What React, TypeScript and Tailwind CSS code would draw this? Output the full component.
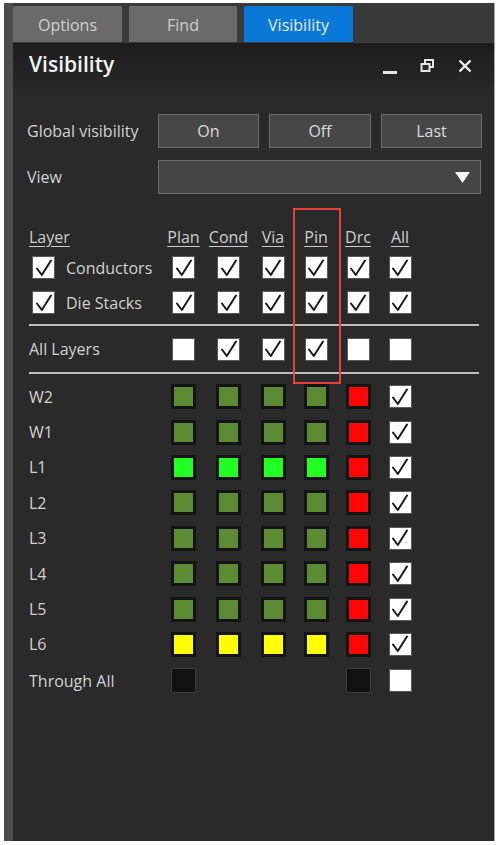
import React from 'react';

const OLIVE = 'bg-[#5d8b33]';
const BRIGHT = 'bg-[#22ff22]';
const RED = 'bg-[#ff0505]';
const YELLOW = 'bg-[#ffff00]';

const layers: { name: string; colors: string[] }[] = [
  { name: 'W2', colors: [OLIVE, OLIVE, OLIVE, OLIVE, RED] },
  { name: 'W1', colors: [OLIVE, OLIVE, OLIVE, OLIVE, RED] },
  { name: 'L1', colors: [BRIGHT, BRIGHT, BRIGHT, BRIGHT, RED] },
  { name: 'L2', colors: [OLIVE, OLIVE, OLIVE, OLIVE, RED] },
  { name: 'L3', colors: [OLIVE, OLIVE, OLIVE, OLIVE, RED] },
  { name: 'L4', colors: [OLIVE, OLIVE, OLIVE, OLIVE, RED] },
  { name: 'L5', colors: [OLIVE, OLIVE, OLIVE, OLIVE, RED] },
  { name: 'L6', colors: [YELLOW, YELLOW, YELLOW, YELLOW, RED] },
];

const cols = ['Plan', 'Cond', 'Via', 'Pin', 'Drc', 'All'];

function Check({ checked = true }: { checked?: boolean }) {
  return (
    <div className="w-[23px] h-[23px] bg-white border border-[#5a5a5a] flex items-center justify-center">
      {checked && (
        <svg width="20" height="20" viewBox="0 0 20 20">
          <path d="M3 10.5 L7.8 17 L17 2.5" fill="none" stroke="#1a1a1a" strokeWidth="2" strokeLinejoin="round" strokeLinecap="round" />
        </svg>
      )}
    </div>
  );
}

function Swatch({ color }: { color: string }) {
  return (
    <div className="w-[25px] h-[25px] bg-[#141414] p-[3px]">
      <div className={`w-full h-full ${color}`} />
    </div>
  );
}

function Cell({ children }: { children?: React.ReactNode }) {
  return <div className="flex items-center justify-center">{children}</div>;
}

const gridCols = 'grid grid-cols-[132px_45px_45px_44px_42px_42px_42px]';

export default function App() {
  return (
    <div
      className="w-[500px] h-[845px] bg-white flex pl-[4px] pr-[5px] pt-[3px] pb-[4px] text-[#d2d2d2]"
      style={{ fontFamily: '"Open Sans", "Noto Sans", sans-serif' }}
    >
      <div className="w-[9px] bg-[#4b4d4c]" />
      <div className="relative flex-1 flex flex-col bg-[#2a2a2a] border-r border-[#9aa8ae]">
        {/* Tabs */}
        <div className="h-[40px] bg-[#3a3a3a] flex items-start gap-[7px] pt-[3px]">
          <div className="w-[109px] h-[36px] bg-[#6a6a6a] rounded-t-[2px] flex items-center justify-center pt-[2px] text-[16px] text-[#cfcfcf]">
            Options
          </div>
          <div className="w-[108px] h-[36px] bg-[#6a6a6a] rounded-t-[2px] flex items-center justify-center pt-[2px] text-[16px] text-[#cfcfcf]">
            Find
          </div>
          <div className="w-[109px] h-[36px] bg-[#0a78d6] rounded-t-[2px] flex items-center justify-center pt-[2px] text-[16px] text-[#e4eefa]">
            Visibility
          </div>
        </div>

        {/* Title bar */}
        <div className="h-[52px] flex items-start pt-[8px] pl-[16px] pr-[22px] bg-gradient-to-b from-[#1c1c1c] to-[#2a2a2a]">
          <div className="text-[21px] leading-[26px] font-semibold text-[#f2f2f2]">Visibility</div>
          <div className="ml-auto flex items-center gap-[23px] h-[26px] mt-[2px]">
            <div className="w-[14px] h-[3px] bg-[#e6e6e6] mt-[12px]" />
            <svg width="15" height="14" viewBox="0 0 15 14">
              <rect x="5" y="1" width="8" height="7" fill="none" stroke="#e6e6e6" strokeWidth="2" />
              <rect x="1.5" y="5" width="8" height="7" fill="#2a2a2a" stroke="#e6e6e6" strokeWidth="2" />
            </svg>
            <svg width="14" height="14" viewBox="0 0 14 14">
              <path d="M1.5 1.5 L12.5 12.5 M12.5 1.5 L1.5 12.5" stroke="#ededed" strokeWidth="2.4" />
            </svg>
          </div>
        </div>

        {/* Global visibility */}
        <div className="mt-[19px] pl-[14px] flex items-center">
          <div className="w-[131px] text-[16px]">Global visibility</div>
          <div className="flex gap-[10px]">
            {['On', 'Off', 'Last'].map((b, i) => (
              <div
                key={b}
                className={`${i === 1 ? 'w-[102px]' : 'w-[101px]'} h-[34px] bg-[#474747] border border-[#6c6c6c] flex items-center justify-center text-[16px] text-[#dadada]`}
              >
                {b}
              </div>
            ))}
          </div>
        </div>

        {/* View */}
        <div className="mt-[12px] pl-[14px] flex items-center">
          <div className="w-[131px] text-[16px]">View</div>
          <div className="w-[323px] h-[34px] bg-[#444444] border border-[#6c6c6c] flex items-center justify-end pr-[10px]">
            <svg width="15" height="11" viewBox="0 0 15 11">
              <path d="M0 0 H15 L7.5 11 Z" fill="#f4f4f4" />
            </svg>
          </div>
        </div>

        {/* Layer grid */}
        <div className="mt-[30px] pl-[16px] pr-[15px]">
          <div className={`${gridCols} h-[26px] items-center text-[16px] text-[#cdcdcd]`}>
            <div className="underline underline-offset-[3px]">Layer</div>
            {cols.map(c => (
              <div key={c} className="text-center underline underline-offset-[3px]">{c}</div>
            ))}
          </div>

          {['Conductors', 'Die Stacks'].map(name => (
            <div key={name} className={`${gridCols} h-[35px] items-center`}>
              <div className="flex items-center gap-[11px] pl-[3px] text-[16px]">
                <Check />
                <span>{name}</span>
              </div>
              {cols.map(c => (
                <Cell key={c}><Check /></Cell>
              ))}
            </div>
          ))}

          <div className="mt-[4px] h-[2px] bg-[#bcbcbc]" />

          <div className={`${gridCols} h-[46px] items-center`}>
            <div className="text-[16px]">All Layers</div>
            <Cell><Check checked={false} /></Cell>
            <Cell><Check /></Cell>
            <Cell><Check /></Cell>
            <Cell><Check /></Cell>
            <Cell><Check checked={false} /></Cell>
            <Cell><Check checked={false} /></Cell>
          </div>

          <div className="h-[2px] bg-[#bcbcbc]" />

          <div className="mt-[5px]">
            {layers.map(l => (
              <div key={l.name} className={`${gridCols} h-[35.4px] items-center`}>
                <div className="text-[16px]">{l.name}</div>
                {l.colors.map((c, i) => (
                  <Cell key={i}><Swatch color={c} /></Cell>
                ))}
                <Cell><Check /></Cell>
              </div>
            ))}
            <div className={`${gridCols} h-[37px] items-center`}>
              <div className="text-[16px]">Through All</div>
              <Cell>
                <div className="w-[25px] h-[25px] bg-[#121212] border border-[#3c3c3c]" />
              </Cell>
              <Cell />
              <Cell />
              <Cell />
              <Cell>
                <div className="w-[25px] h-[25px] bg-[#121212] border border-[#3c3c3c]" />
              </Cell>
              <Cell><Check checked={false} /></Cell>
            </div>
          </div>
        </div>

        {/* Highlight annotation over Pin column */}
        <div className="absolute left-[280px] top-[205px] w-[48px] h-[176px] border-2 border-[#e5413b] pointer-events-none" />
      </div>
    </div>
  );
}
